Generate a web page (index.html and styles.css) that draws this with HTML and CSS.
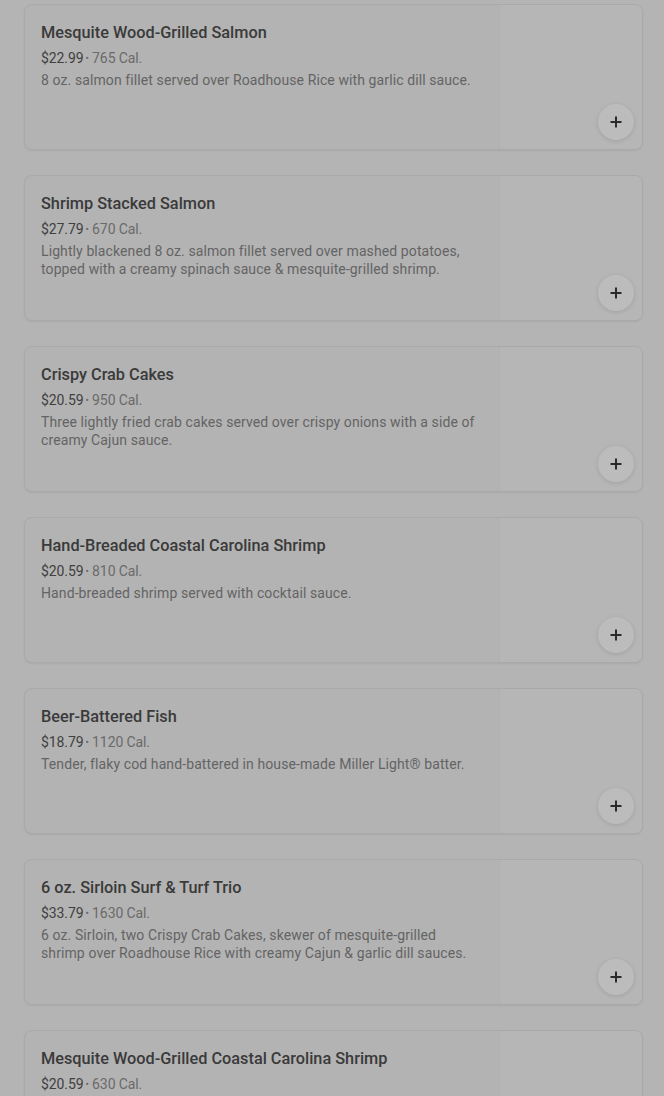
FILE: index.html
```html
<!DOCTYPE html>
<html>
<head>
<meta charset="utf-8">
<link rel="stylesheet" href="styles.css">
</head>
<body>
<div class="list">
  <div class="card">
    <div class="info">
      <div class="title">Mesquite Wood-Grilled Salmon</div>
      <div class="meta"><span class="price">$22.99</span><span class="dot">•</span> 765 Cal.</div>
      <div class="desc">8 oz. salmon fillet served over Roadhouse Rice with garlic dill sauce.</div>
    </div>
    <div class="media"><button class="add"><svg width="14" height="14" viewBox="0 0 14 14"><path d="M7 1.5v11M1.5 7h11" stroke="#2a2a2a" stroke-width="2"/></svg></button></div>
  </div>
  <div class="card">
    <div class="info">
      <div class="title">Shrimp Stacked Salmon</div>
      <div class="meta"><span class="price">$27.79</span><span class="dot">•</span> 670 Cal.</div>
      <div class="desc">Lightly blackened 8 oz. salmon fillet served over mashed potatoes, topped with a creamy spinach sauce &amp; mesquite-grilled shrimp.</div>
    </div>
    <div class="media"><button class="add"><svg width="14" height="14" viewBox="0 0 14 14"><path d="M7 1.5v11M1.5 7h11" stroke="#2a2a2a" stroke-width="2"/></svg></button></div>
  </div>
  <div class="card">
    <div class="info">
      <div class="title">Crispy Crab Cakes</div>
      <div class="meta"><span class="price">$20.59</span><span class="dot">•</span> 950 Cal.</div>
      <div class="desc">Three lightly fried crab cakes served over crispy onions with a side of creamy Cajun sauce.</div>
    </div>
    <div class="media"><button class="add"><svg width="14" height="14" viewBox="0 0 14 14"><path d="M7 1.5v11M1.5 7h11" stroke="#2a2a2a" stroke-width="2"/></svg></button></div>
  </div>
  <div class="card">
    <div class="info">
      <div class="title">Hand-Breaded Coastal Carolina Shrimp</div>
      <div class="meta"><span class="price">$20.59</span><span class="dot">•</span> 810 Cal.</div>
      <div class="desc">Hand-breaded shrimp served with cocktail sauce.</div>
    </div>
    <div class="media"><button class="add"><svg width="14" height="14" viewBox="0 0 14 14"><path d="M7 1.5v11M1.5 7h11" stroke="#2a2a2a" stroke-width="2"/></svg></button></div>
  </div>
  <div class="card">
    <div class="info">
      <div class="title">Beer-Battered Fish</div>
      <div class="meta"><span class="price">$18.79</span><span class="dot">•</span> 1120 Cal.</div>
      <div class="desc">Tender, flaky cod hand-battered in house-made Miller Light® batter.</div>
    </div>
    <div class="media"><button class="add"><svg width="14" height="14" viewBox="0 0 14 14"><path d="M7 1.5v11M1.5 7h11" stroke="#2a2a2a" stroke-width="2"/></svg></button></div>
  </div>
  <div class="card">
    <div class="info">
      <div class="title">6 oz. Sirloin Surf &amp; Turf Trio</div>
      <div class="meta"><span class="price">$33.79</span><span class="dot">•</span> 1630 Cal.</div>
      <div class="desc">6 oz. Sirloin, two Crispy Crab Cakes, skewer of mesquite-grilled shrimp over Roadhouse Rice with creamy Cajun &amp; garlic dill sauces.</div>
    </div>
    <div class="media"><button class="add"><svg width="14" height="14" viewBox="0 0 14 14"><path d="M7 1.5v11M1.5 7h11" stroke="#2a2a2a" stroke-width="2"/></svg></button></div>
  </div>
  <div class="card">
    <div class="info">
      <div class="title">Mesquite Wood-Grilled Coastal Carolina Shrimp</div>
      <div class="meta"><span class="price">$20.59</span><span class="dot">•</span> 630 Cal.</div>
      <div class="desc">Mesquite wood-grilled shrimp served over Roadhouse Rice with garlic butter.</div>
    </div>
    <div class="media"><button class="add"><svg width="14" height="14" viewBox="0 0 14 14"><path d="M7 1.5v11M1.5 7h11" stroke="#2a2a2a" stroke-width="2"/></svg></button></div>
  </div>
</div>
</body>
</html>
```
FILE: styles.css
```css
html, body {
  margin: 0;
  padding: 0;
  background: #b4b4b4;
  font-family: Roboto, "Noto Sans", sans-serif;
  overflow: hidden;
}
.list {
  display: flex;
  flex-direction: column;
  gap: 25px;
  padding: 4px 21px 0 24px;
  height: 1092px;
  overflow: hidden;
}
.card {
  display: flex;
  flex: none;
  height: 146px;
  box-sizing: border-box;
  border: 1px solid #a9a9a9;
  border-radius: 8px;
  background: #b3b3b3;
  box-shadow: 0 1px 2px rgba(0,0,0,0.06);
  overflow: hidden;
}
.info {
  flex: 1;
  padding: 17px 16px 0 16px;
  min-width: 0;
}
.title {
  font-size: 16.3px;
  font-weight: 500;
  line-height: 22px;
  color: #3a3a3a;
}
.meta {
  margin-top: 4px;
  font-size: 14px;
  line-height: 20px;
  color: #6a6a6a;
  letter-spacing: -0.1px;
}
.price {
  color: #404040;
}
.dot {
  font-size: 10px;
  margin-left: 2px;
  vertical-align: 1px;
}
.desc {
  margin-top: 2px;
  font-size: 14px;
  line-height: 18px;
  color: #646464;
  letter-spacing: 0.1px;
  max-width: 438px;
}
.media {
  position: relative;
  width: 142px;
  flex: none;
  background: #b6b6b6;
  border-left: 1px solid #b0b0b0;
}
.add {
  position: absolute;
  right: 8px;
  bottom: 9px;
  width: 36px;
  height: 36px;
  border-radius: 50%;
  border: none;
  padding: 0;
  background: #bcbcbc;
  box-shadow: 0 1px 4px rgba(0,0,0,0.12);
  display: flex;
  align-items: center;
  justify-content: center;
}
```
